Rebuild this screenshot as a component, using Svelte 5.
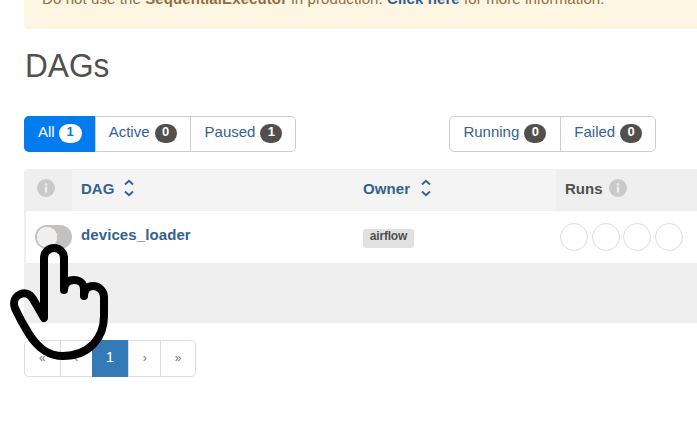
<script>
  const left = [['All', 1], ['Active', 0], ['Paused', 1]];
  const right = [['Running', 0], ['Failed', 0]];
  const pages = ['«', '‹', '1', '›', '»'];
</script>

{#snippet info()}
  <svg class="info" width="18" height="18" viewBox="0 0 18 18">
    <circle cx="9" cy="9" r="9" fill="#cacaca" />
    <path d="M7.800 4.300h2.400v2.200H7.800zM7.800 7.800h2.400v5.700H7.800z" fill="#efefef" />
  </svg>
{/snippet}

{#snippet sort()}
  <svg class="sort" width="10" height="18" viewBox="0 0 10 18" fill="none" stroke="#34628f" stroke-width="1.9">
    <path d="M1 5.5 5 1.7l4 3.8M1 12.5l4 3.8 4-3.8" />
  </svg>
{/snippet}

{#snippet group(items, active)}
  <div class="group">
    {#each items as [label, count], i}
      <a class="btn" class:active={active === i}><span class="lbl">{label}</span><span class="badge"><span>{count}</span></span></a>
    {/each}
  </div>
{/snippet}

<main>
  <div class="alert"><span class="msg">Do not use the <b>SequentialExecutor</b> in production. <b class="link">Click here</b> for more information.</span></div>
  <h2>DAGs</h2>
  <div class="filters">
    {@render group(left, 0)}
    {@render group(right, -1)}
  </div>
  <section class="table">
    <div class="row head">
      <div class="c0">{@render info()}</div>
      <div class="c1"><span class="t dag">DAG</span>{@render sort()}</div>
      <div class="c2"><span class="t owner">Owner</span>{@render sort()}</div>
      <div class="c3"><span class="t runs">Runs</span>{@render info()}</div>
    </div>
    <div class="row body">
      <div class="c0"><span class="switch"></span></div>
      <div class="c1"><span class="name">devices_loader</span></div>
      <div class="c2"><span class="tag"><span>airflow</span></span></div>
      <div class="c3">{#each [0, 1, 2, 3] as _}<span class="ring"></span>{/each}</div>
    </div>
  </section>
  <nav>
    {#each pages as p}<span class="page" class:current={p === '1'}>{p}</span>{/each}
  </nav>
  <svg class="hand" width="115" height="130" viewBox="0 235 115 130">
    <path d="M44 318V258a10 10 0 0 1 20 0V290C64 283 68 280 74 280c6 0 10 4 10 9V296C84 289 88 286 93 286c6 0 11 5 11 11V316c0 23-16 40-41 40C48 356 38 348 29 334 24 326 19 317 15.300 309 9.500 296 26 287 33 299Z" fill="none" stroke="#000" stroke-width="8" stroke-linejoin="round" stroke-linecap="round" />
  </svg>
</main>

<style>
  :global(body) { background: #fff; overflow: hidden; }
  main { position: relative; width: 697px; height: 444px; overflow: hidden; padding-left: 24px; box-sizing: border-box; font: 15px/20px "Liberation Sans", Arial, sans-serif; color: #51504f; }
  .alert { height: 29px; background: #fdf6e2; border-radius: 0 0 0 4px; color: #8d6f40; padding-left: 18px; overflow: hidden; white-space: nowrap; box-sizing: border-box; }
  .msg { display: block; margin-top: -11px; letter-spacing: .1px; }
  .link { color: #34628f; }
  h2 { margin: 16px 0 0 .5px; font-size: 34px; line-height: 40px; font-weight: 400; transform: scaleX(.93); transform-origin: 0 0; }
  .filters { display: flex; gap: 153px; margin-top: 31px; height: 36px; }
  .group { display: flex; border: 1px solid #ccc; border-radius: 5px; box-sizing: border-box; overflow: hidden; }
  .btn { display: flex; padding: 6px 13px 0 13px; gap: 5px; height: 28px; color: #34628f; border-left: 1px solid #ccc; box-sizing: content-box; }
  .btn:first-child { border-left: 0; padding-right: 14px; }
  .btn.active { gap: 4px; padding-right: 14px; color: #fff; background: #017cee; }
  .group:has(.active) { border: 0; box-shadow: inset 0 0 0 1px #ccc; }
  .group:has(.active) .btn { padding-top: 7px; height: 29px; }
  .group:has(.active) .btn:first-child { padding-left: 14px; }
  .group:has(.active) .btn:last-child { padding-left: 14px; padding-right: 14px; }
  .lbl { line-height: 18px; }
  .badge { width: 22px; height: 19px; margin-top: 1px; border-radius: 10px; background: #51504f; color: #fff; font-weight: 700; font-size: 13px; line-height: 16px; text-align: center; }
  .active .badge { width: 23px; background: #fff; color: #017cee; }
  .btn.active { margin-right: -1px; }
  .table { margin-top: 17px; height: 154px; background: #efefef; border-radius: 4px 0 0 0; box-sizing: border-box; padding: 1px 0 0 2px; }
  .row { display: flex; }
  .row > div { display: flex; box-sizing: border-box; }
  .head { height: 41px; font-weight: 700; }
  .head .c1, .head .c2 { background: #f4f4f4; color: #34628f; height: 40px; }
  .head > div { padding-top: 9px; }
  .c0 { width: 46px; padding-left: 11px; }
  .c1 { width: 282px; padding-left: 9px; }
  .c2 { width: 202px; padding-left: 9px; }
  .c3 { flex: 1; padding-left: 9px; }
  .t { line-height: 19px; }
  .dag { margin-right: 10px; }
  .owner { margin-right: 11px; letter-spacing: .1px; }
  .runs { margin-right: 6px; }
  .body { height: 52px; background: #fff; }
  .body .c0 { padding: 14px 0 0 9px; }
  .switch { width: 37px; height: 24px; border-radius: 12px; background: radial-gradient(circle at 12px 12px, #efefef 10px, transparent 10.5px), #c3c2c1; }
  .name { font-weight: 700; color: #34628f; line-height: 48px; letter-spacing: .1px; }
  .tag { margin-top: 18px; width: 51px; height: 19px; border-radius: 3px; background: #e1e1e1; font-size: 12px; letter-spacing: -.2px; font-weight: 700; line-height: 14px; text-align: center; }
  .body .c3 { padding: 12px 0 0 4px; gap: 3.6px; }
  .ring { flex: none; width: 28px; height: 28px; border: 1px solid #ddd; border-radius: 50%; box-sizing: border-box; }
  nav { display: flex; width: 172px; height: 37px; margin-top: 17px; border: 1px solid #ddd; border-radius: 5px; box-sizing: border-box; }
  .page { box-sizing: border-box; width: 32px; border-left: 1px solid #ddd; text-align: center; line-height: 34px; color: #777; font-size: 12px; }
  .page:first-child { width: 35px; border: 0; }
  .page:last-child { width: 35px; }
  .page.current { width: 37px; height: 37px; margin-top: -1px; background: #337ab7; border: 0; color: #fff; font-size: 15px; }
  .hand { position: absolute; left: 0; top: 235px; }
</style>
